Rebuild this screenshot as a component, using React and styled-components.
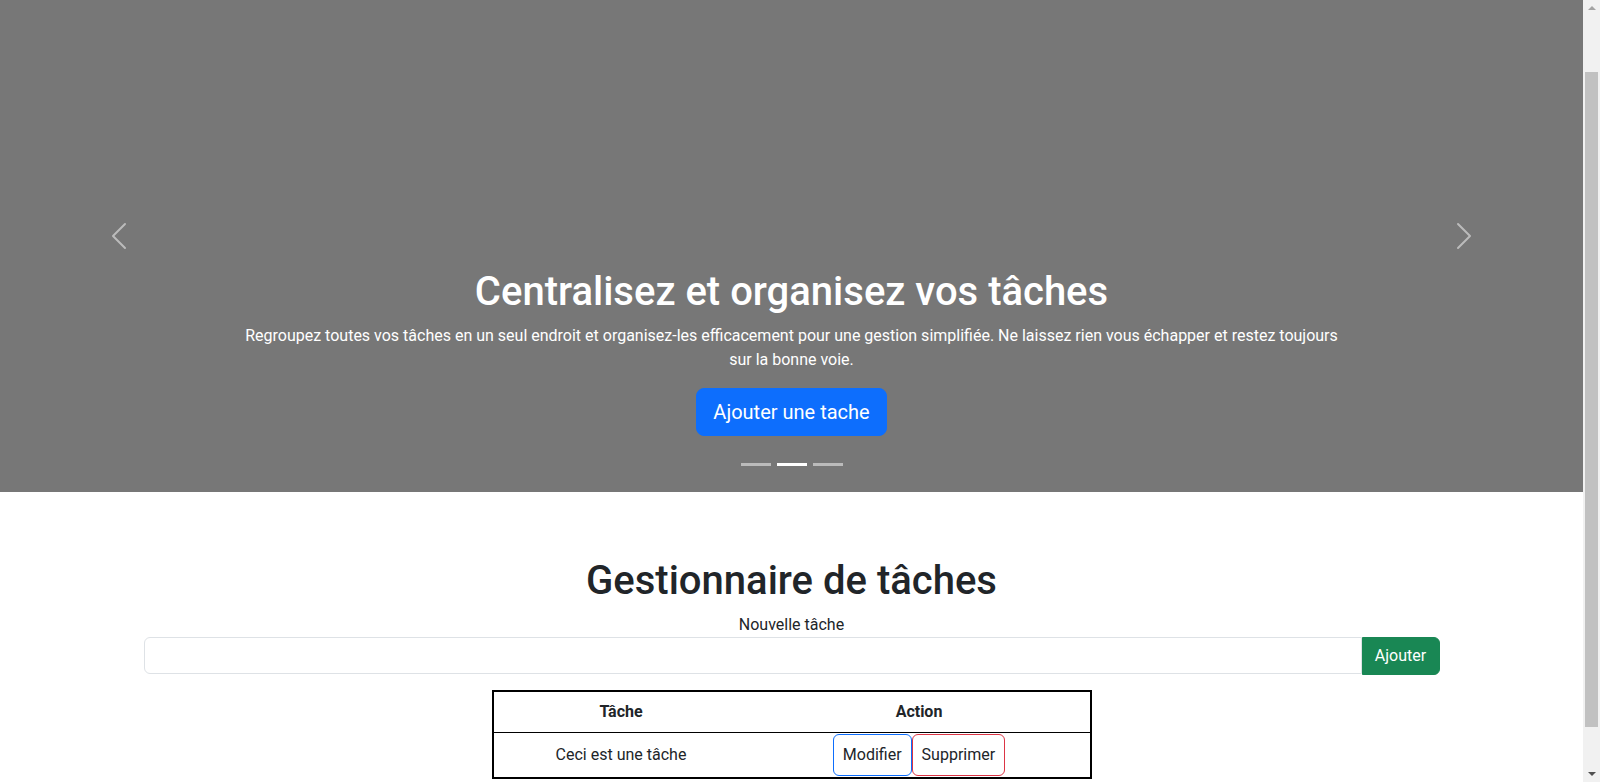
import React from "react";
import styled, { createGlobalStyle } from "styled-components";

const GlobalStyle = createGlobalStyle`
  body {
    margin: 0;
    font-family: Roboto, "Liberation Sans", sans-serif;
    font-size: 16px;
    line-height: 1.5;
    color: #212529;
    background: #fff;
  }
  * { box-sizing: border-box; }
`;

const Page = styled.div`
  margin-right: 17px;
`;

/* stands in for the browser's own scrollbar seen in the screenshot */
const ScrollTrack = styled.div`
  position: fixed;
  top: 0;
  right: 0;
  bottom: 0;
  width: 17px;
  background: #f1f1f1;
  z-index: 5;
`;

const ScrollArrow = styled.span`
  position: absolute;
  left: 5px;
  ${(p) => (p.$up ? "top: 6px;" : "bottom: 6px;")}
  width: 0;
  height: 0;
  border-left: 4px solid transparent;
  border-right: 4px solid transparent;
  ${(p) =>
    p.$up ? "border-bottom: 4px solid #a3a3a3;" : "border-top: 4px solid #505050;"}
`;

const ScrollThumb = styled.span`
  position: absolute;
  left: 2px;
  width: 13px;
  top: 72px;
  height: 655px;
  background: #c1c1c1;
`;

const Carousel = styled.section`
  position: relative;
  height: 492px;
  background: #777;
  display: flex;
  flex-direction: column;
  align-items: center;
  justify-content: flex-end;
`;

const Control = styled.button`
  position: absolute;
  top: 0;
  bottom: 20px;
  ${(p) => (p.$side === "left" ? "left: 0;" : "right: 0;")}
  width: 15%;
  display: flex;
  align-items: center;
  justify-content: center;
  background: none;
  border: 0;
  padding: 0;
  opacity: 0.5;
  cursor: pointer;
`;

const Caption = styled.div`
  width: 70%;
  padding: 20px 0;
  margin-bottom: 20px;
  color: #fff;
  text-align: center;
`;

const Title = styled.h1`
  margin: 0 0 8px;
  font-size: 40px;
  font-weight: 500;
  line-height: 1.2;
`;

const Lead = styled.p`
  margin: 0 0 16px;
`;

const Actions = styled.p`
  margin: 0 0 16px;
`;

const BigButton = styled.button`
  font-family: inherit;
  font-size: 20px;
  line-height: 1.5;
  padding: 8px 16px;
  border-radius: 8px;
  border: 1px solid #0d6efd;
  background: #0d6efd;
  color: #fff;
  cursor: pointer;
`;

const Indicators = styled.div`
  position: absolute;
  bottom: 0;
  left: 0;
  right: 0;
  display: flex;
  justify-content: center;
  margin-bottom: 16px;
`;

const Dot = styled.span`
  width: 30px;
  height: 3px;
  margin: 10px 3px;
  background: #fff;
  opacity: ${(p) => (p.$active ? 1 : 0.5)};
`;

const Container = styled.main`
  max-width: 1320px;
  margin: 0 auto;
  padding: 65px 12px 110px;
`;

const Heading = styled.h1`
  margin: 0 0 8px;
  text-align: center;
  font-size: 40px;
  font-weight: 500;
  line-height: 1.2;
`;

const Label = styled.label`
  display: block;
  text-align: center;
`;

const InputGroup = styled.div`
  display: flex;
`;

const Input = styled.input`
  flex: 1;
  height: 37px;
  padding: 6px 12px;
  font: inherit;
  border: 1px solid #dee2e6;
  border-radius: 6px 0 0 6px;
  outline: none;
`;

const AddButton = styled.button`
  font: inherit;
  width: 78px;
  padding: 6px 0;
  border: 1px solid #198754;
  background: #198754;
  color: #fff;
  border-radius: 0 6px 6px 0;
  cursor: pointer;
`;

const Table = styled.table`
  width: 600px;
  margin: 15px auto 0;
  border-collapse: collapse;
  border: 2px solid #000;
  text-align: center;
`;

const Th = styled.th`
  padding: 8px;
  font-weight: 700;
  border-bottom: 1px solid #000;
  width: ${(p) => p.$w || "auto"};
`;

const Td = styled.td`
  padding: 1px 8px;
  vertical-align: middle;
`;

const RowButton = styled.button`
  font: inherit;
  color: #212529;
  background: #fff;
  padding: 8px 9px;
  border: 1px solid ${(p) => p.$color};
  border-radius: 6px;
  cursor: pointer;
`;

const Chevron = ({ dir }) => (
  <svg width="32" height="32" viewBox="0 0 16 16" fill="#fff">
    {dir === "left" ? (
      <path d="M11.354 1.646a.5.5 0 0 1 0 .708L5.707 8l5.647 5.646a.5.5 0 0 1-.708.708l-6-6a.5.5 0 0 1 0-.708l6-6a.5.5 0 0 1 .708 0z" />
    ) : (
      <path d="M4.646 1.646a.5.5 0 0 1 .708 0l6 6a.5.5 0 0 1 0 .708l-6 6a.5.5 0 0 1-.708-.708L10.293 8 4.646 2.354a.5.5 0 0 1 0-.708z" />
    )}
  </svg>
);

export default function App() {
  return (
    <>
      <GlobalStyle />
      <Page>
        <Carousel>
          <Control $side="left" aria-label="Previous">
            <Chevron dir="left" />
          </Control>
          <Control $side="right" aria-label="Next">
            <Chevron dir="right" />
          </Control>
          <Caption>
            <Title>Centralisez et organisez vos tâches</Title>
            <Lead>
              Regroupez toutes vos tâches en un seul endroit et organisez-les efficacement pour une gestion simplifiée. Ne laissez rien vous échapper et restez toujours sur la bonne voie.
            </Lead>
            <Actions>
              <BigButton>Ajouter une tache</BigButton>
            </Actions>
          </Caption>
          <Indicators>
            <Dot />
            <Dot $active />
            <Dot />
          </Indicators>
        </Carousel>
        <Container>
          <Heading>Gestionnaire de tâches</Heading>
          <Label htmlFor="task">Nouvelle tâche</Label>
          <InputGroup>
            <Input id="task" type="text" />
            <AddButton>Ajouter</AddButton>
          </InputGroup>
          <Table>
            <thead>
              <tr>
                <Th $w="256px">Tâche</Th>
                <Th>Action</Th>
              </tr>
            </thead>
            <tbody>
              <tr>
                <Td>Ceci est une tâche</Td>
                <Td>
                  <RowButton $color="#0d6efd">Modifier</RowButton>
                  <RowButton $color="#dc3545">Supprimer</RowButton>
                </Td>
              </tr>
            </tbody>
          </Table>
        </Container>
      </Page>
      <ScrollTrack>
        <ScrollArrow $up />
        <ScrollThumb />
        <ScrollArrow />
      </ScrollTrack>
    </>
  );
}
